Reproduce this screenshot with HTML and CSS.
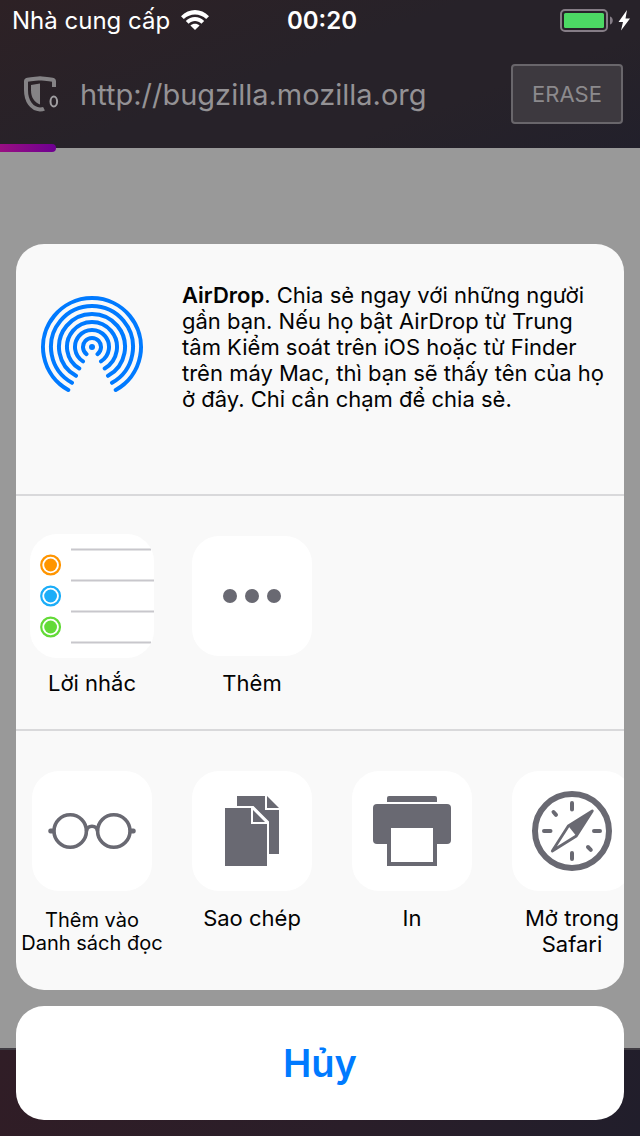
FILE: index.html
```html
<!DOCTYPE html>
<html lang="vi">
<head>
<meta charset="utf-8">
<meta name="viewport" content="width=device-width, initial-scale=1">
<title>Chia sẻ</title>
<link rel="stylesheet" href="styles.css">
</head>
<body>
<div class="screen">
  <header class="top">
    <div class="status">
      <div class="carrier">
        <span>Nhà cung cấp</span>
        <svg class="wifi" viewBox="0 0 28 20" aria-hidden="true">
          <path d="M0 6.200C8-2 20-2 28 6.200L25.200 9C19 2.900 9 2.900 2.800 9Z"/>
          <path d="M4.800 11C10 5.800 18 5.800 23.200 11L20.400 13.800C16.800 10.200 11.200 10.200 7.600 13.800Z"/>
          <path d="M9.400 15.600C12 13.200 16 13.200 18.600 15.600L14 20Z"/>
        </svg>
      </div>
      <time class="clock">00:20</time>
      <svg class="battery" viewBox="0 0 72 24" aria-hidden="true">
        <rect x="1" y="2" width="46" height="21" rx="4" fill="none" stroke="#857d86" stroke-width="2"/>
        <rect x="4" y="5" width="40" height="15" rx="1.500" fill="#4cd964"/>
        <path d="M50 8.500C53.700 9.500 53.700 15.500 50 16.500Z" fill="#857d86"/>
        <path d="M67 2L58.500 14H63L61 22.500L70 10.500H65.500Z" fill="#fff"/>
      </svg>
    </div>
    <div class="urlbar">
      <svg class="shield" viewBox="0 0 36 38" aria-hidden="true">
        <path d="M30 12V6.500C30 5.600 29.500 5 28.500 4.800C24 4.300 20 3.700 16 3.200C12 3.700 8 4.300 3.500 4.800C2.500 5 2 5.600 2 6.500V15C2 26 7.500 34 16 34.500C17.500 34.500 19 34.300 20 33.800" fill="none" stroke="#858386" stroke-width="4"/>
        <path d="M16 8.500L7 10V15.500C7 22 10 27 16 29.500Z" fill="#858386"/>
        <ellipse cx="29.800" cy="26.500" rx="3.300" ry="5" fill="none" stroke="#a09ea1" stroke-width="2"/>
      </svg>
      <a class="url" href="#">http://bugzilla.mozilla.org</a>
      <button class="erase" type="button">ERASE</button>
    </div>
    <div class="progress"></div>
  </header>
  <main class="page"></main>
  <footer class="toolbar"></footer>

  <section class="share" aria-label="Chia sẻ">
    <div class="sheet">
      <div class="airdrop">
        <svg class="airdrop-icon" viewBox="0 0 104 104" aria-hidden="true">
          <path d="M28.300 95A49 49 0 1 1 75.700 95M32 87.800A41 41 0 1 1 72 87.800M36 80.800A33 33 0 1 1 68 80.800M39.300 73.500A25 25 0 1 1 64.700 73.500M43 66.400A17 17 0 1 1 61 66.400M46.500 59.100A9 9 0 1 1 57.500 59.100"/>
          <circle cx="52" cy="52" r="3"/>
        </svg>
        <p class="airdrop-text"><b>AirDrop</b>. Chia sẻ ngay với những người gần bạn. Nếu họ bật AirDrop từ Trung tâm Kiểm soát trên iOS hoặc từ Finder trên máy Mac, thì bạn sẽ thấy tên của họ ở đây. Chỉ cần chạm để chia sẻ.</p>
      </div>

      <div class="row apps">
        <button class="item" type="button">
          <span class="slot"><svg class="tile large" viewBox="0 0 124 124" aria-hidden="true">
            <path d="M41 15.400H121M41 46.400H124M41 77.400H124M41 108.400H121" stroke="#c8c7cc" stroke-width="2"/>
            <g fill="none" stroke-width="2.200">
              <circle cx="20.600" cy="31" r="9.400" stroke="#ff9500"/>
              <circle cx="20.600" cy="62" r="9.400" stroke="#1badf8"/>
              <circle cx="20.600" cy="93" r="9.400" stroke="#63da38"/>
            </g>
            <circle cx="20.600" cy="31" r="6.400" fill="#ff9500"/>
            <circle cx="20.600" cy="62" r="6.400" fill="#1badf8"/>
            <circle cx="20.600" cy="93" r="6.400" fill="#63da38"/>
          </svg></span>
          <span class="label">Lời nhắc</span>
        </button>
        <button class="item" type="button">
          <span class="slot"><svg class="tile" viewBox="0 0 120 120" aria-hidden="true">
            <g fill="#696972"><circle cx="38" cy="60" r="7"/><circle cx="60" cy="60" r="7"/><circle cx="82" cy="60" r="7"/></g>
          </svg></span>
          <span class="label">Thêm</span>
        </button>
      </div>

      <div class="row actions">
        <button class="item" type="button">
          <svg class="tile" viewBox="0 0 120 120" aria-hidden="true">
            <g fill="none" stroke="#696972" stroke-width="3.600">
              <circle cx="38.200" cy="60" r="16.200"/><circle cx="81.800" cy="60" r="16.200"/>
              <path d="M54.500 60C55.500 53.600 64.500 53.600 65.500 60"/>
            </g>
            <path d="M22 57.500H18.500C15.500 57.500 15.500 62.500 18.500 62.500H22ZM98 57.500H101.500C104.500 57.500 104.500 62.500 101.500 62.500H98Z" fill="#696972"/>
          </svg>
          <span class="label small">Thêm vào<br>Danh sách đọc</span>
        </button>
        <button class="item" type="button">
          <svg class="tile" viewBox="0 0 120 120" aria-hidden="true">
            <g fill="#696972">
              <path d="M45 25H73V39H87V83H77V50.500L61.500 35H45Z"/>
              <path d="M75 25L87 37H75Z"/>
              <path d="M33 37H59V53H75V95H33Z"/>
              <path d="M61 39L73 51H61Z"/>
            </g>
          </svg>
          <span class="label">Sao chép</span>
        </button>
        <button class="item" type="button">
          <svg class="tile" viewBox="0 0 120 120" aria-hidden="true">
            <g fill="#696972">
              <path d="M35 31V27Q35 25 37 25H83Q85 25 85 27V31Z"/>
              <rect x="21" y="33" width="78" height="40" rx="4"/>
              <rect x="35" y="57" width="50" height="38"/>
            </g>
            <rect x="39" y="57" width="42" height="34" fill="#fff"/>
          </svg>
          <span class="label">In</span>
        </button>
        <button class="item" type="button">
          <svg class="tile" viewBox="0 0 120 120" aria-hidden="true">
            <g fill="none" stroke="#696972" stroke-linecap="round" stroke-linejoin="round">
              <circle cx="60" cy="60" r="37" stroke-width="6"/>
              <path d="M60 32V38.500M60 82V88M32 60H38.500M82 60H88M41.500 41L44 43.800M76 76L78.800 78.800" stroke-width="4"/>
              <path d="M80.300 40L56.300 55L40.300 80L64.300 65Z" stroke-width="2.800"/>
            </g>
            <path d="M80.300 40L56.300 55L64.300 65Z" fill="#696972"/>
          </svg>
          <span class="label">Mở trong<br>Safari</span>
        </button>
      </div>
    </div>
    <button class="cancel" type="button">Hủy</button>
  </section>
</div>
</body>
</html>
```
FILE: styles.css
```css
* {
  box-sizing: border-box;
}

body {
  margin: 0;
  font-family: Inter, "Noto Sans", sans-serif;
  color: #030303;
}

button {
  margin: 0;
  padding: 0;
  border: 0;
  background: none;
  font: inherit;
  color: inherit;
}

.screen {
  position: relative;
  display: flex;
  flex-direction: column;
  min-height: 100vh;
  overflow: hidden;
}

.top {
  position: relative;
  background: linear-gradient(160deg, #2d2125 0%, #272229 45%, #272229 70%, #22202b 100%);
}

.status {
  display: grid;
  grid-template-columns: 1fr auto 1fr;
  align-items: center;
  height: 40px;
  padding: 0 8px 0 12px;
  color: #fff;
  font-size: 24px;
}

.carrier {
  display: flex;
  align-items: center;
  gap: 11px;
  white-space: nowrap;
}

.wifi {
  width: 28px;
  height: 20px;
  fill: #fff;
}

.clock {
  font-weight: 600;
}

.battery {
  width: 72px;
  height: 24px;
  justify-self: end;
}

.urlbar {
  display: flex;
  align-items: center;
  height: 108px;
  padding: 0 17px 0 24px;
}

.shield {
  width: 36px;
  height: 38px;
  margin-right: 20px;
}

.url {
  flex: 1;
  color: #949295;
  font-size: 29px;
  text-decoration: none;
}

.erase {
  width: 112px;
  height: 60px;
  border: 2px solid #69666b;
  border-radius: 4px;
  background: #3d393f;
  color: #8c8a8d;
  font-size: 22px;
}

.progress {
  position: absolute;
  left: 0;
  bottom: -4px;
  width: 56px;
  height: 8px;
  border-radius: 0 4px 4px 0;
  background: linear-gradient(90deg, #990f82, #6e0091);
}

.page {
  flex: 1;
  background: #999;
}

.toolbar {
  height: 88px;
  border-top: 2px solid #403c43;
  background: linear-gradient(100deg, #301d26, #2a1e29 55%, #211e2b);
}

.share {
  position: absolute;
  left: 16px;
  right: 16px;
  bottom: 16px;
  display: flex;
  flex-direction: column;
  gap: 16px;
}

.sheet {
  overflow: hidden;
  border-radius: 28px;
  background: #f9f9f9;
}

.airdrop {
  display: flex;
  align-items: flex-start;
  gap: 38px;
  min-height: 250px;
  padding: 38px 12px 0 24px;
}

.airdrop-icon {
  flex: none;
  width: 104px;
  height: 104px;
  margin-top: 13px;
  fill: none;
  stroke: #007aff;
  stroke-width: 4;
  stroke-linecap: round;
}

.airdrop-icon circle {
  fill: #007aff;
  stroke: none;
}

.airdrop-text {
  margin: 0;
  font-size: 22px;
  line-height: 26px;
}

.airdrop-text b {
  font-weight: 600;
}

.row {
  display: flex;
  gap: 8px;
  overflow: hidden;
  border-top: 2px solid #d9d9db;
}

.apps {
  min-height: 235px;
  padding-top: 38px;
}

.actions {
  min-height: 261px;
  padding-top: 40px;
}

.item {
  flex: none;
  display: flex;
  flex-direction: column;
  align-items: center;
  width: 152px;
}

.slot {
  display: flex;
  align-items: center;
  height: 124px;
}

.tile {
  flex: none;
  width: 120px;
  height: 120px;
  border-radius: 27px;
  background: #fff;
}

.large {
  width: 124px;
  height: 124px;
}

.label {
  margin-top: 14px;
  font-size: 22px;
  line-height: 26px;
  white-space: nowrap;
}

.apps .label {
  margin-top: 12px;
}

.small {
  margin-top: 18px;
  font-size: 20px;
  line-height: 23px;
}

.cancel {
  height: 114px;
  border-radius: 28px;
  background: #fff;
  color: #007aff;
  font-size: 38px;
  font-weight: 600;
}
```
